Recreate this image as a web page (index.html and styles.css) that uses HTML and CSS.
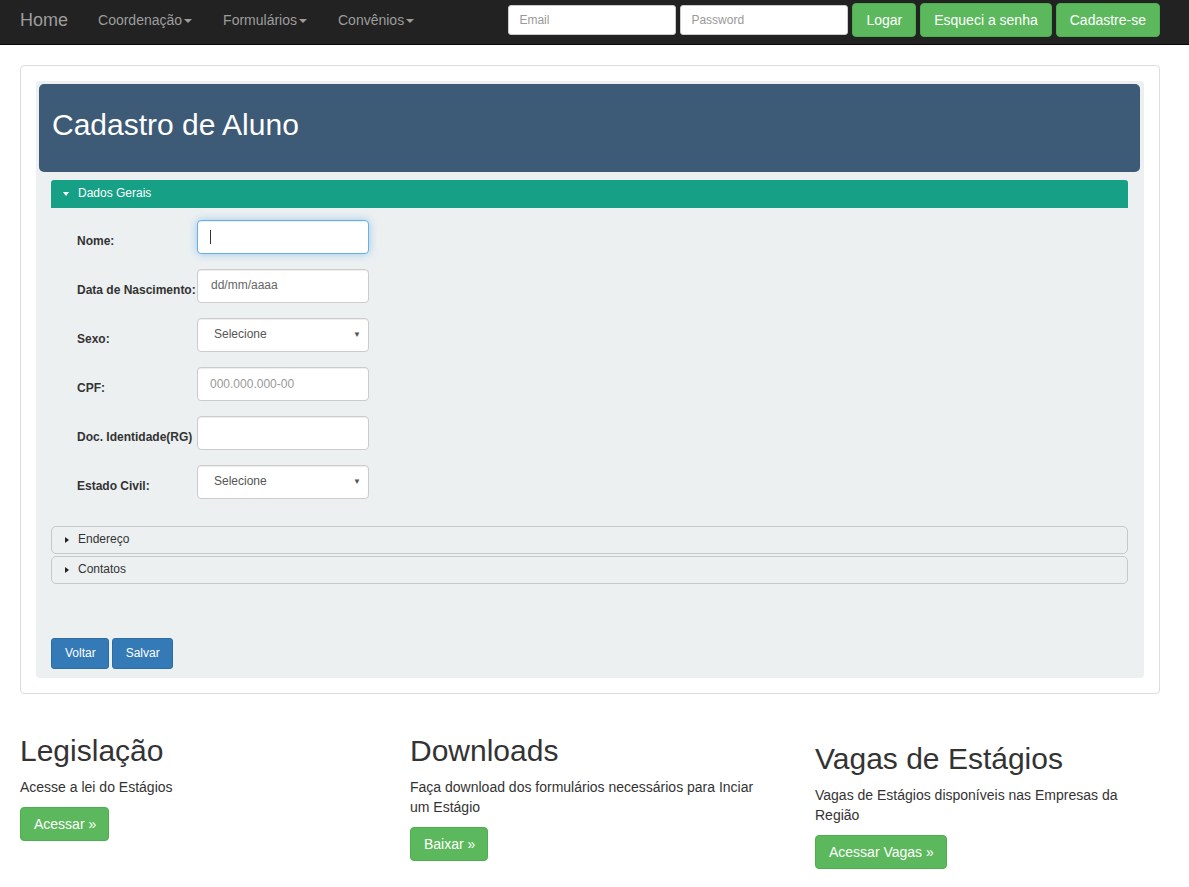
FILE: index.html
```html
<!DOCTYPE html>
<html lang="pt-BR">
<head>
<meta charset="utf-8">
<title>Cadastro de Aluno</title>
<link rel="stylesheet" href="styles.css">
</head>
<body>
<nav class="navbar">
  <a class="brand" href="#">Home</a>
  <ul class="nav-links">
    <li><a href="#">Coordenação<span class="caret"></span></a></li>
    <li><a href="#">Formulários<span class="caret"></span></a></li>
    <li><a href="#">Convênios<span class="caret"></span></a></li>
  </ul>
  <form class="nav-form">
    <input class="nav-input" type="text" placeholder="Email">
    <input class="nav-input" type="password" placeholder="Password">
    <button class="btn btn-success nav-btn" type="button">Logar</button>
    <button class="btn btn-success nav-btn" type="button">Esqueci a senha</button>
    <button class="btn btn-success nav-btn" type="button">Cadastre-se</button>
  </form>
</nav>

<main class="page">
  <section class="panel">
    <div class="form-box">
      <header class="form-header">
        <h1>Cadastro de Aluno</h1>
      </header>

      <div class="section-open">
        <div class="section-title"><span class="tri-down"></span>Dados Gerais</div>
        <div class="fields">
          <div class="row">
            <label class="lbl">Nome:</label>
            <span class="field-wrap"><input class="field focused" type="text"><span class="fake-caret"></span></span>
          </div>
          <div class="row">
            <label class="lbl">Data de Nascimento:</label>
            <input class="field date" type="text" placeholder="dd/mm/aaaa">
          </div>
          <div class="row">
            <label class="lbl">Sexo:</label>
            <div class="field select"><span>Selecione</span><span class="sel-arrow">▼</span></div>
          </div>
          <div class="row">
            <label class="lbl">CPF:</label>
            <input class="field" type="text" placeholder="000.000.000-00">
          </div>
          <div class="row">
            <label class="lbl">Doc. Identidade(RG)</label>
            <input class="field" type="text">
          </div>
          <div class="row">
            <label class="lbl">Estado Civil:</label>
            <div class="field select"><span>Selecione</span><span class="sel-arrow">▼</span></div>
          </div>
        </div>
      </div>

      <div class="collapsed-list">
        <div class="collapsed"><span class="tri-right"></span>Endereço</div>
        <div class="collapsed"><span class="tri-right"></span>Contatos</div>
      </div>

      <div class="actions">
        <button class="btn btn-primary btn-sm" type="button">Voltar</button>
        <button class="btn btn-primary btn-sm" type="button">Salvar</button>
      </div>
    </div>
  </section>

  <section class="features">
    <div class="col">
      <h2>Legislação</h2>
      <p>Acesse a lei do Estágios</p>
      <a class="btn btn-success btn-md" href="#">Acessar »</a>
    </div>
    <div class="col">
      <h2>Downloads</h2>
      <p>Faça download dos formulários necessários para Inciar um Estágio</p>
      <a class="btn btn-success btn-md" href="#">Baixar »</a>
    </div>
    <div class="col col-third">
      <h2>Vagas de Estágios</h2>
      <p>Vagas de Estágios disponíveis nas Empresas da Região</p>
      <a class="btn btn-success btn-md" href="#">Acessar Vagas »</a>
    </div>
  </section>
</main>
</body>
</html>
```

FILE: styles.css
```css
* { box-sizing: border-box; }

body {
  margin: 0;
  font-family: "Liberation Sans", Arial, Helvetica, sans-serif;
  font-size: 14px;
  line-height: 1.42857;
  color: #333;
  background: #fff;
}

a { text-decoration: none; }

/* Navbar */
.navbar {
  display: flex;
  align-items: center;
  height: 45px;
  padding: 0 29px 4px 20px;
  background: #222;
  border-bottom: 1px solid #080808;
}

.brand {
  color: #9d9d9d;
  font-size: 18px;
  line-height: 20px;
}

.nav-links {
  display: flex;
  gap: 31px;
  list-style: none;
  margin: 0 0 0 30px;
  padding: 0;
}

.nav-links a {
  color: #9d9d9d;
  font-size: 14px;
  line-height: 20px;
}

.caret {
  display: inline-block;
  width: 0;
  height: 0;
  margin-left: 2px;
  vertical-align: middle;
  border-top: 4px solid #9d9d9d;
  border-left: 4px solid transparent;
  border-right: 4px solid transparent;
}

.nav-form {
  display: flex;
  align-items: center;
  gap: 4px;
  margin-left: auto;
}

.nav-input {
  width: 168px;
  height: 30px;
  padding: 0 10px;
  border: 1px solid #ccc;
  border-radius: 3px;
  background: #fff;
  font-family: inherit;
  font-size: 12px;
  color: #555;
}

.nav-input::placeholder { color: #999; }

/* Buttons */
.btn {
  display: inline-block;
  font-family: inherit;
  font-size: 14px;
  line-height: 20px;
  border: 1px solid transparent;
  border-radius: 4px;
  color: #fff;
  cursor: pointer;
  text-align: center;
  white-space: nowrap;
}

.btn-success {
  background: #5cb85c;
  border-color: #4cae4c;
}

.btn-primary {
  background: #337ab7;
  border-color: #2e6da4;
}

.nav-btn {
  height: 34px;
  padding: 0 13px;
  font-size: 14px;
}

.btn-md {
  padding: 6px 12px;
}

.btn-sm {
  height: 31px;
  padding: 0 12px 0 13px;
  font-size: 12px;
  line-height: 29px;
  border-radius: 3px;
}

/* Page */
.page {
  padding: 20px 0 0 20px;
}

.panel {
  width: 1140px;
  padding: 15px;
  border: 1px solid #ddd;
  border-radius: 4px;
  background: #fff;
  margin-bottom: 20px;
}

.form-box {
  background: #ecf0f1;
  border-radius: 4px;
  padding: 3px 4px 9px 3px;
}

.form-header {
  background: #3d5a76;
  border-radius: 5px;
  height: 88px;
  padding: 24px 13px 0;
}

.form-header h1 {
  margin: 0;
  font-size: 30px;
  font-weight: normal;
  line-height: 33px;
  color: #fff;
}

.section-open {
  margin: 8px 12px 0 12px;
}

.section-title {
  display: flex;
  align-items: center;
  height: 28px;
  padding-left: 12px;
  background: #16a085;
  border-radius: 3px 3px 0 0;
  color: #fff;
  font-size: 12px;
}

.tri-down {
  width: 0;
  height: 0;
  border-top: 4px solid #fff;
  border-left: 3.5px solid transparent;
  border-right: 3.5px solid transparent;
  margin-right: 9px;
}

.fields {
  display: flex;
  flex-direction: column;
  gap: 15px;
  padding: 12px 0 0 26px;
}

.row {
  display: flex;
  align-items: center;
}

.lbl {
  width: 120px;
  padding-top: 10px;
  font-size: 12px;
  font-weight: bold;
  color: #333;
  white-space: nowrap;
}

.field-wrap {
  position: relative;
  display: inline-block;
}

.field {
  width: 172px;
  height: 34px;
  padding: 0 12px;
  border: 1px solid #ccc;
  border-radius: 4px;
  background: #fff;
  font-family: inherit;
  font-size: 12px;
  color: #555;
  box-shadow: inset 0 1px 1px rgba(0,0,0,.075);
}

.field::placeholder { color: #999; }

.field.date { padding-bottom: 3px; padding-left: 13px; }
.field.date::placeholder { color: #666; }

.field.focused {
  border-color: #66afe9;
  outline: 0;
  box-shadow: inset 0 1px 1px rgba(0,0,0,.075), 0 0 8px rgba(102,175,233,.6);
}

.fake-caret {
  position: absolute;
  left: 13px;
  top: 10px;
  width: 1px;
  height: 14px;
  background: #333;
}

.select {
  display: flex;
  align-items: center;
  justify-content: space-between;
  padding: 0 7px 0 16px;
  color: #555;
}

.sel-arrow {
  font-size: 8px;
  color: #555;
}

.collapsed-list {
  display: flex;
  flex-direction: column;
  gap: 2px;
  margin: 27px 12px 0 12px;
}

.collapsed {
  display: flex;
  align-items: center;
  height: 28px;
  padding-left: 12px;
  border: 1px solid #c6c9cb;
  border-radius: 5px;
  font-size: 12px;
  color: #333;
}

.tri-right {
  width: 0;
  height: 0;
  border-left: 4px solid #222;
  border-top: 3.5px solid transparent;
  border-bottom: 3.5px solid transparent;
  margin-left: 1px;
  margin-right: 9px;
}

.actions {
  display: flex;
  gap: 3px;
  margin: 54px 0 0 12px;
}

/* Features */
.features {
  display: flex;
  gap: 30px;
}

.col {
  width: 360px;
}

.col-third {
  width: 340px;
  margin-left: 15px;
  padding-top: 8px;
}

.col h2 {
  margin: 20px 0 10px;
  font-size: 30px;
  font-weight: normal;
  line-height: 33px;
  color: #333;
}

.col p {
  margin: 0 0 10px;
  line-height: 20px;
}

.col .btn-md { padding: 6px 12px 6px 13px; }
```
